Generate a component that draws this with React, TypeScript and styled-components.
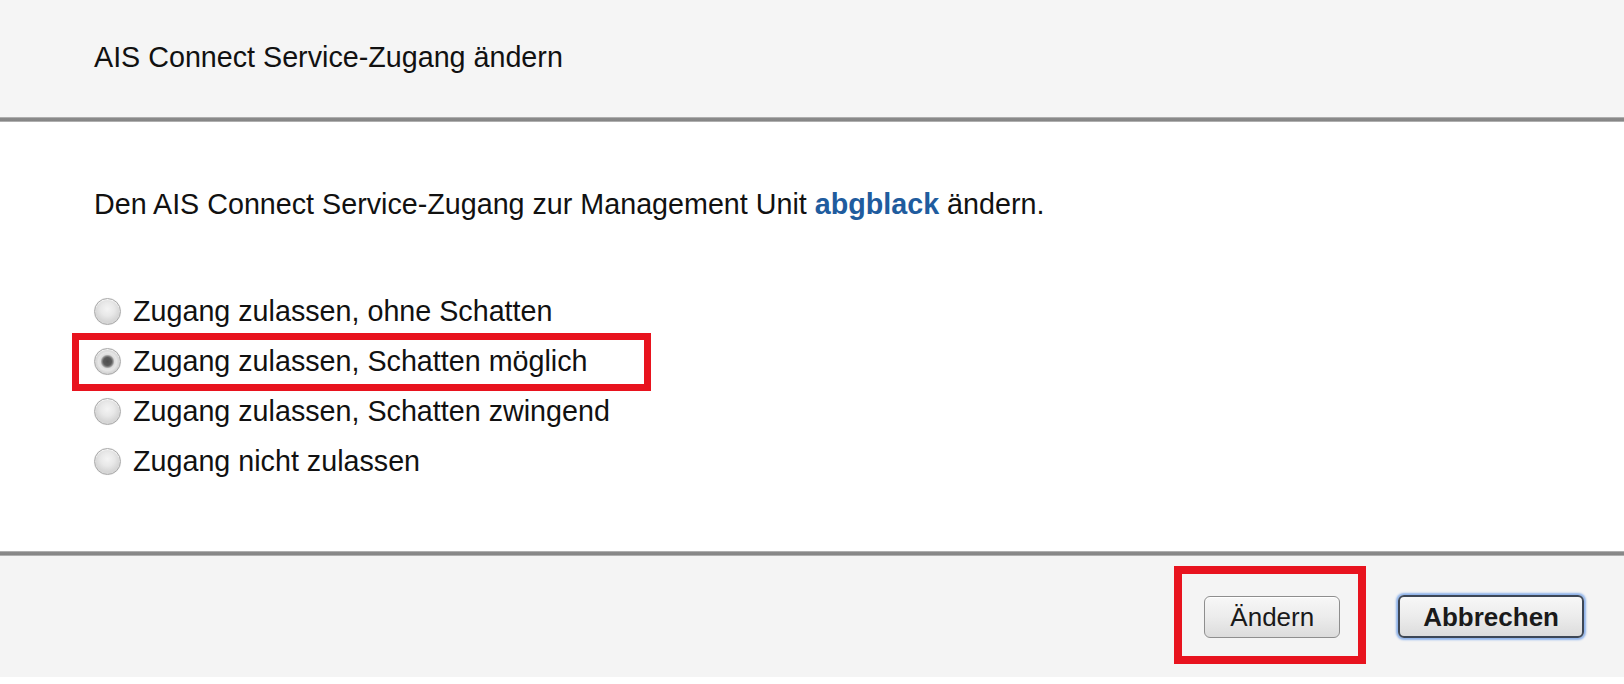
import React from "react";
import styled, { createGlobalStyle } from "styled-components";

const Global = createGlobalStyle`
  html, body { margin: 0; padding: 0; background: #ffffff; }
  body { font-family: "Liberation Sans", Arial, Helvetica, sans-serif; color: #111111; }
  * { box-sizing: border-box; }
`;

const Dialog = styled.div`
  display: flex;
  flex-direction: column;
  width: 1624px;
`;

const Header = styled.header`
  height: 117px;
  background: #f5f5f5;
  display: flex;
  align-items: center;
  padding: 0 0 2px 94px;
`;

const Title = styled.h1`
  margin: 0;
  font-size: 28.7px;
  font-weight: 400;
  line-height: 1;
  color: #111;
`;

const Rule = styled.div`
  height: 5px;
  background: linear-gradient(#c6c6c6 0%, #8a8a8a 25%, #868686 75%, #cacaca 100%);
`;

const Body = styled.main`
  height: 429px;
  padding: 65px 0 0 94px;
  background: #ffffff;
`;

const Intro = styled.p`
  margin: 0;
  font-size: 28.7px;
  line-height: 34px;
`;

const UnitLink = styled.a`
  color: #1f5c9e;
  font-weight: 700;
  text-decoration: none;
`;

const Options = styled.div`
  margin-top: 65px;
  display: flex;
  flex-direction: column;
`;

const Option = styled.label`
  position: relative;
  height: 50px;
  display: flex;
  align-items: center;
  gap: 12px;
  font-size: 28.7px;
  line-height: 1;
`;

const RadioDot = styled.span<{ $checked?: boolean }>`
  position: relative;
  width: 27px;
  height: 27px;
  flex: none;
  border-radius: 50%;
  border: 1px solid #a9a9a9;
  background: ${(p) =>
    p.$checked
      ? "radial-gradient(circle at 50% 50%, #4e4e4e 0, #5a5a5a 4px, #8a8a8a 5.5px, #dcdcdc 7px, #e6e6e6 9px, #cfcfcf 12.5px)"
      : "radial-gradient(circle at 50% 40%, #f4f4f4 0, #e8e8e8 7px, #d6d6d6 12.5px)"};
  box-shadow: inset 0 1px 1px rgba(255, 255, 255, 0.8), 0 0 1px rgba(0, 0, 0, 0.1);
`;

const Highlight = styled.span<{ $w?: number }>`
  position: absolute;
  border: 7px solid #e8131e;
  pointer-events: none;
`;

const RowHighlight = styled(Highlight)`
  left: -22px;
  top: -3px;
  bottom: -5px;
  width: 579px;
`;

const ButtonHighlight = styled(Highlight)`
  left: -30px;
  top: -30px;
  right: -26px;
  bottom: -26px;
  border-width: 8px;
`;

const Footer = styled.footer`
  height: 121px;
  background: #f4f4f4;
  display: flex;
  justify-content: flex-end;
  align-items: center;
  gap: 58px;
  padding: 0 40px 0 0;
`;

const ButtonSlot = styled.div`
  position: relative;
  display: flex;
`;

const Button = styled.button<{ $primary?: boolean }>`
  height: ${(p) => (p.$primary ? "43px" : "42px")};
  padding: 0 ${(p) => (p.$primary ? "23px" : "25px")};
  font-family: "Liberation Sans", Arial, sans-serif;
  font-size: 26px;
  font-weight: ${(p) => (p.$primary ? 700 : 400)};
  color: #1a1a1a;
  border-radius: 6px;
  border: ${(p) => (p.$primary ? "2px solid #3d4756" : "1px solid #8e8e8e")};
  background: linear-gradient(#f7f7f7 0%, #ececec 50%, #dcdcdc 100%);
  box-shadow: ${(p) =>
    p.$primary ? "0 0 2px 2px #8fb3ea" : "inset 0 1px 0 #ffffff"};
  cursor: pointer;
  line-height: 1;
`;

const options = [
  "Zugang zulassen, ohne Schatten",
  "Zugang zulassen, Schatten möglich",
  "Zugang zulassen, Schatten zwingend",
  "Zugang nicht zulassen",
];

export default function App() {
  const selected = 1;
  return (
    <>
      <Global />
      <Dialog>
        <Header>
          <Title>AIS Connect Service-Zugang ändern</Title>
        </Header>
        <Rule />
        <Body>
          <Intro>
            Den AIS Connect Service-Zugang zur Management Unit{" "}
            <UnitLink href="#">abgblack</UnitLink> ändern.
          </Intro>
          <Options>
            {options.map((label, i) => (
              <Option key={label}>
                <RadioDot $checked={i === selected} />
                <span>{label}</span>
                {i === selected && <RowHighlight />}
              </Option>
            ))}
          </Options>
        </Body>
        <Rule />
        <Footer>
          <ButtonSlot>
            <Button>Ändern</Button>
            <ButtonHighlight />
          </ButtonSlot>
          <ButtonSlot>
            <Button $primary>Abbrechen</Button>
          </ButtonSlot>
        </Footer>
      </Dialog>
    </>
  );
}
